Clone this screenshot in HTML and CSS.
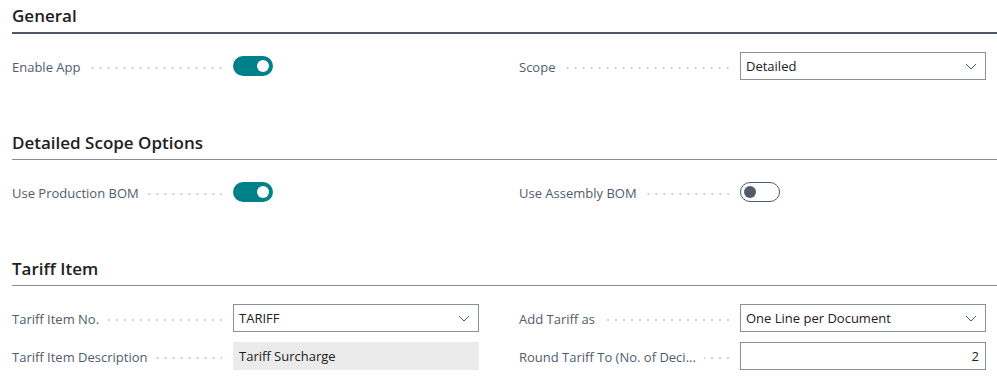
FILE: index.html
```html
<!DOCTYPE html>
<html>
<head>
    <meta charset="UTF-8">
    <meta name="viewport" content="width=device-width, initial-scale=1.0">
    <title>Tariff Setup</title>
    <link rel="stylesheet" href="styles.css">
</head>
<body>
    <div class="card-page">
        <!-- General -->
        <section class="fast-tab">
            <h2 class="tab-caption active">General</h2>
            <div class="field-grid">
                <div class="field-row">
                    <div class="field-label"><span>Enable App</span><i class="leader"></i></div>
                    <div class="field-value">
                        <span class="toggle on"><span class="knob"></span></span>
                    </div>
                </div>
                <div class="field-row">
                    <div class="field-label"><span>Scope</span><i class="leader"></i></div>
                    <div class="field-value">
                        <div class="input select">
                            <span class="input-text">Detailed</span>
                            <svg class="chevron" width="12" height="12" viewBox="0 0 12 12"><path d="M1 4l5 5 5-5" fill="none" stroke="#505c6d" stroke-width="1"/></svg>
                        </div>
                    </div>
                </div>
            </div>
        </section>

        <!-- Detailed Scope Options -->
        <section class="fast-tab">
            <h2 class="tab-caption">Detailed Scope Options</h2>
            <div class="field-grid">
                <div class="field-row">
                    <div class="field-label"><span>Use Production BOM</span><i class="leader"></i></div>
                    <div class="field-value">
                        <span class="toggle on"><span class="knob"></span></span>
                    </div>
                </div>
                <div class="field-row">
                    <div class="field-label"><span>Use Assembly BOM</span><i class="leader"></i></div>
                    <div class="field-value">
                        <span class="toggle off"><span class="knob"></span></span>
                    </div>
                </div>
            </div>
        </section>

        <!-- Tariff Item -->
        <section class="fast-tab">
            <h2 class="tab-caption">Tariff Item</h2>
            <div class="field-grid">
                <div class="field-row">
                    <div class="field-label"><span>Tariff Item No.</span><i class="leader"></i></div>
                    <div class="field-value">
                        <div class="input select">
                            <span class="input-text">TARIFF</span>
                            <svg class="chevron" width="12" height="12" viewBox="0 0 12 12"><path d="M1 4l5 5 5-5" fill="none" stroke="#505c6d" stroke-width="1"/></svg>
                        </div>
                    </div>
                </div>
                <div class="field-row">
                    <div class="field-label"><span>Add Tariff as</span><i class="leader"></i></div>
                    <div class="field-value">
                        <div class="input select">
                            <span class="input-text">One Line per Document</span>
                            <svg class="chevron" width="12" height="12" viewBox="0 0 12 12"><path d="M1 4l5 5 5-5" fill="none" stroke="#505c6d" stroke-width="1"/></svg>
                        </div>
                    </div>
                </div>
                <div class="field-row">
                    <div class="field-label"><span>Tariff Item Description</span><i class="leader"></i></div>
                    <div class="field-value">
                        <div class="input readonly">
                            <span class="input-text">Tariff Surcharge</span>
                        </div>
                    </div>
                </div>
                <div class="field-row">
                    <div class="field-label" title="Round Tariff To (No. of Decimals)"><span>Round Tariff To (No. of Deci...</span><i class="leader"></i></div>
                    <div class="field-value">
                        <div class="input number">
                            <span class="input-text">2</span>
                        </div>
                    </div>
                </div>
            </div>
        </section>
    </div>
</body>
</html>
```

FILE: styles.css
```css
body {
    margin: 0;
    background: white;
    font-family: "Open Sans", "Liberation Sans", sans-serif;
    color: #212121;
}
.card-page {
    padding-left: 12px;
}
.fast-tab {
    margin-bottom: 47px;
}
.fast-tab:last-child {
    margin-bottom: 0;
}
.tab-caption {
    margin: 0;
    height: 32px;
    line-height: 31px;
    font-size: 17px;
    font-weight: 600;
    color: #212121;
    border-bottom: 1px solid #8a8d93;
}
.tab-caption.active {
    border-bottom: 2px solid #505865;
}
.field-grid {
    display: grid;
    grid-template-columns: 1fr 1fr;
    column-gap: 40px;
    row-gap: 10px;
    padding-top: 18px;
    padding-right: 11px;
}
.field-row {
    display: flex;
    align-items: center;
    height: 28px;
}
.field-label {
    width: 221px;
    flex-shrink: 0;
    display: flex;
    align-items: center;
    font-size: 13px;
    color: #505c6d;
    padding-top: 2px;
}
.field-label span {
    white-space: nowrap;
}
.leader {
    flex: 1;
    height: 2px;
    margin: 2px 11px 0 8px;
    background-image: linear-gradient(to right, transparent 6px, #cfcfcf 6px);
    background-size: 8px 2px;
    background-repeat: repeat-x;
    background-position: right center;
}
.field-value {
    flex: 1;
    display: flex;
    align-items: center;
}
.input {
    flex: 1;
    height: 28px;
    box-sizing: border-box;
    border: 1px solid #8a9099;
    display: flex;
    align-items: center;
    padding: 0 8px 0 5px;
    font-size: 13px;
    color: #212121;
}
.input-text {
    flex: 1;
}
.input.readonly {
    background: #ebebeb;
    border-color: #ebebeb;
}
.input.number {
    padding-right: 6px;
}
.input.number .input-text {
    text-align: right;
}
.chevron {
    display: block;
}
.toggle {
    position: relative;
    display: inline-block;
    width: 40px;
    height: 20px;
    box-sizing: border-box;
    border-radius: 10px;
}
.toggle .knob {
    position: absolute;
    top: 50%;
    width: 12px;
    height: 12px;
    margin-top: -6px;
    border-radius: 50%;
}
.toggle.on {
    background: #00818a;
}
.toggle.on .knob {
    right: 4px;
    background: white;
}
.toggle.off {
    border: 1.5px solid #505c6d;
    background: white;
}
.toggle.off .knob {
    left: 3px;
    background: #505c6d;
}
```
